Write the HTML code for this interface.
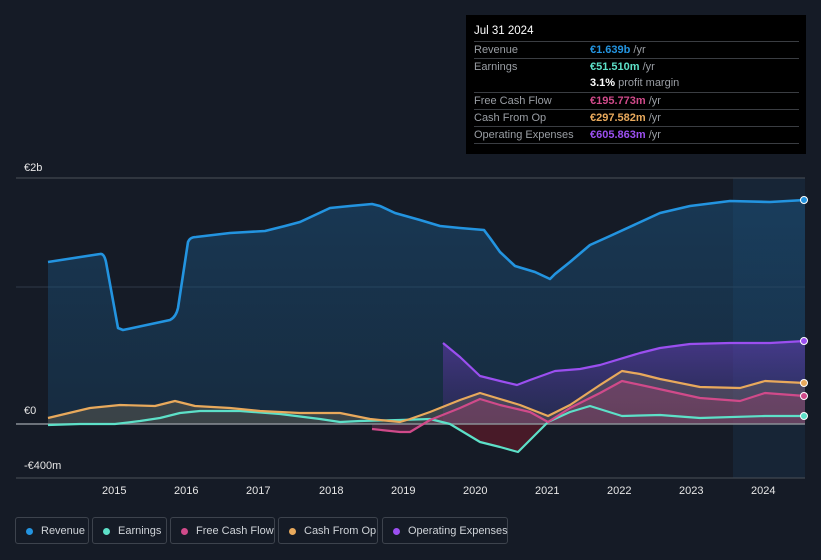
<!DOCTYPE html>
<html><head><meta charset="utf-8"><style>
body{margin:0;background:#151b26;font-family:"Liberation Sans",sans-serif;}
.wrap{position:relative;width:821px;height:560px;overflow:hidden;background:#151b26;}
.tt{position:absolute;left:466px;top:15px;width:340px;height:139px;background:#000;color:#fff;font-size:11px;}
.tt .d{position:absolute;left:8px;top:10px;font-size:11.5px;}
.row{position:absolute;left:8px;width:325px;height:17px;border-top:1px solid #3a3d42;line-height:17px;}
.row .l{position:absolute;left:0;color:#9a9ea4;}
.row .v{position:absolute;left:116px;font-weight:bold;}
.row .v span{color:#9a9ea4;font-weight:normal;}
.ax{position:absolute;color:#e6e6e6;font-size:11px;}
.leg{position:absolute;top:517px;height:27px;border:1px solid #3d434d;border-radius:3px;color:#cfd3d8;font-size:11px;line-height:26px;box-sizing:border-box;}
.leg i{position:absolute;left:10px;top:10px;width:7px;height:7px;border-radius:50%;}
.leg b{font-weight:normal;position:absolute;left:25px;white-space:nowrap;}
</style></head><body><div class="wrap">
<svg width="821" height="560" style="position:absolute;left:0;top:0">
<defs>
<linearGradient id="rg" x1="0" y1="0" x2="0" y2="1"><stop offset="0" stop-color="#1b5a8a" stop-opacity=".45"/><stop offset="1" stop-color="#1b4a70" stop-opacity=".35"/></linearGradient>
<linearGradient id="og" x1="0" y1="0" x2="0" y2="1"><stop offset="0" stop-color="#7b3fd0" stop-opacity=".45"/><stop offset="1" stop-color="#5a2a90" stop-opacity=".2"/></linearGradient>
</defs>
<rect x="733" y="178" width="72" height="300" fill="#1c3a55" opacity=".35"/>
<line x1="16" y1="178" x2="805" y2="178" stroke="#4a5058"/>
<line x1="16" y1="287" x2="805" y2="287" stroke="#2e3a48"/>
<line x1="16" y1="478" x2="805" y2="478" stroke="#4a5058"/>
<path d="M48,262 L100,254 Q104,253 106,262 L118,328 L123,330 L170,320 Q176,317 178,308 L188,242 Q190,237 196,237 L230,233 L265,231 L285,226 L300,222 L330,208 L350,206 L372,204 L380,206 L395,213 L420,220 L440,226 L460,228 L484,230 L490,238 L500,252 L515,266 L535,272 L550,279 L555,274 L570,262 L590,245 L610,236 L660,213 L690,206 L730,201 L770,202 L805,200 L805,424 L48,424Z" fill="url(#rg)"/>
<path d="M443,343 L460,357 L480,376 L500,381 L517,385 L530,380 L555,371 L580,369 L600,365 L640,353 L660,348 L690,344 L730,343 L770,343 L805,341 L805,424 L443,424Z" fill="url(#og)"/>
<path d="M48,418 L90,408 L120,405 L155,406 L175,401 L195,406 L230,408 L260,411 L300,413 L340,413 L370,419 L400,422 L410,419 L430,412 L460,400 L480,393 L500,399 L520,405 L548,416 L570,405 L600,385 L622,371 L640,374 L660,379 L700,387 L740,388 L765,381 L805,383 L805,424 L48,424Z" fill="#8a7a5a" opacity=".3"/>
<path d="M372,429 L400,432 L410,432 L430,420 L460,408 L480,399 L500,405 L530,412 L548,422 L570,408 L600,393 L622,381 L650,387 L700,398 L740,401 L765,393 L805,396 L805,424 L372,424Z" fill="#b03a70" opacity=".3"/>
<path d="M450,424 L470,436 L480,442 L500,447 L518,452 L530,440 L548,424Z" fill="#6a1a2a" opacity=".6"/>
<line x1="16" y1="424" x2="805" y2="424" stroke="#8a8f96" stroke-width="1.5"/>
<g fill="none" stroke-width="2.2" stroke-linejoin="round">
<path d="M48,425 L80,424 L115,424 L140,421 L160,418 L180,413 L200,411 L240,411 L280,414 L320,419 L340,422 L360,421 L400,420 L430,419 L450,424 L470,436 L480,442 L500,447 L518,452 L530,440 L548,422 L570,412 L590,406 L622,416 L660,415 L700,418 L765,416 L805,416" stroke="#5de0c8"/>
<path d="M372,429 L400,432 L410,432 L430,420 L460,408 L480,399 L500,405 L530,412 L548,422 L570,408 L600,393 L622,381 L650,387 L700,398 L740,401 L765,393 L805,396" stroke="#d04a8a"/>
<path d="M48,418 L90,408 L120,405 L155,406 L175,401 L195,406 L230,408 L260,411 L300,413 L340,413 L370,419 L400,422 L410,419 L430,412 L460,400 L480,393 L500,399 L520,405 L548,416 L570,405 L600,385 L622,371 L640,374 L660,379 L700,387 L740,388 L765,381 L805,383" stroke="#e8a95c"/>
<path d="M443,343 L460,357 L480,376 L500,381 L517,385 L530,380 L555,371 L580,369 L600,365 L640,353 L660,348 L690,344 L730,343 L770,343 L805,341" stroke="#9b4ff0"/>
<path d="M48,262 L100,254 Q104,253 106,262 L118,328 L123,330 L170,320 Q176,317 178,308 L188,242 Q190,237 196,237 L230,233 L265,231 L285,226 L300,222 L330,208 L350,206 L372,204 L380,206 L395,213 L420,220 L440,226 L460,228 L484,230 L490,238 L500,252 L515,266 L535,272 L550,279 L555,274 L570,262 L590,245 L610,236 L660,213 L690,206 L730,201 L770,202 L805,200" stroke="#2394e0" stroke-width="2.6"/>
</g>
<g stroke="#fff" stroke-width="1">
<circle cx="804" cy="200" r="3.5" fill="#2394e0"/><circle cx="804" cy="341" r="3.5" fill="#9b4ff0"/><circle cx="804" cy="383" r="3.5" fill="#e8a95c"/><circle cx="804" cy="396" r="3.5" fill="#d04a8a"/><circle cx="804" cy="416" r="3.5" fill="#5de0c8"/>
</g>
</svg>
<div class="ax" style="left:24px;top:162px">€2b</div>
<div class="ax" style="left:24px;top:405px">€0</div>
<div class="ax" style="left:24px;top:460px">-€400m</div>
<div class="ax" style="left:102px;top:485px">2015</div><div class="ax" style="left:174px;top:485px">2016</div><div class="ax" style="left:246px;top:485px">2017</div><div class="ax" style="left:319px;top:485px">2018</div><div class="ax" style="left:391px;top:485px">2019</div><div class="ax" style="left:463px;top:485px">2020</div><div class="ax" style="left:535px;top:485px">2021</div><div class="ax" style="left:607px;top:485px">2022</div><div class="ax" style="left:679px;top:485px">2023</div><div class="ax" style="left:751px;top:485px">2024</div>
<div class="tt"><div class="d">Jul 31 2024</div>
<div class="row" style="top:26px"><span class="l">Revenue</span><span class="v" style="color:#2394e0">€1.639b <span>/yr</span></span></div>
<div class="row" style="top:43px"><span class="l">Earnings</span><span class="v" style="color:#5de0c8">€51.510m <span>/yr</span></span></div>
<div class="row" style="top:60px;border-top:none"><span class="v" style="color:#fff">3.1% <span>profit margin</span></span></div>
<div class="row" style="top:77px"><span class="l">Free Cash Flow</span><span class="v" style="color:#d04a8a">€195.773m <span>/yr</span></span></div>
<div class="row" style="top:94px"><span class="l">Cash From Op</span><span class="v" style="color:#e8a95c">€297.582m <span>/yr</span></span></div>
<div class="row" style="top:111px"><span class="l">Operating Expenses</span><span class="v" style="color:#9b4ff0">€605.863m <span>/yr</span></span></div>
<div class="row" style="top:128px;height:0"></div>
</div>
<div class="leg" style="left:15px;width:74px"><i style="background:#2394e0"></i><b>Revenue</b></div>
<div class="leg" style="left:92px;width:75px"><i style="background:#5de0c8"></i><b>Earnings</b></div>
<div class="leg" style="left:170px;width:105px"><i style="background:#d04a8a"></i><b>Free Cash Flow</b></div>
<div class="leg" style="left:278px;width:100px"><i style="background:#e8a95c"></i><b>Cash From Op</b></div>
<div class="leg" style="left:382px;width:126px"><i style="background:#9b4ff0"></i><b>Operating Expenses</b></div>
</div></body></html>
